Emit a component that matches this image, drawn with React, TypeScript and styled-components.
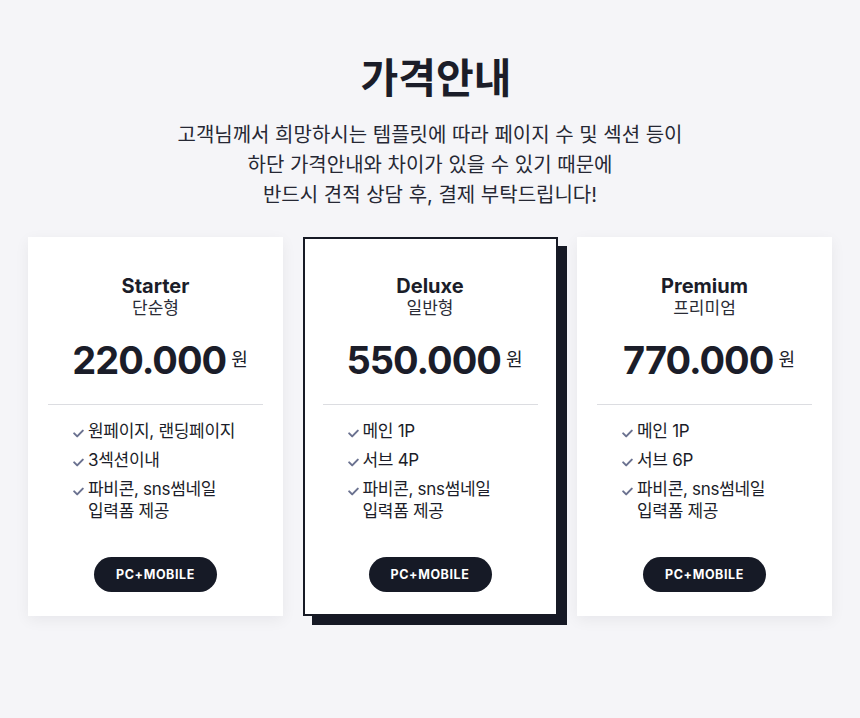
import React from "react";
import styled, { createGlobalStyle, css } from "styled-components";

const GlobalStyle = createGlobalStyle`
  html, body {
    margin: 0;
    padding: 0;
    background: #f5f5f8;
  }
  body {
    font-family: Inter, "Noto Sans CJK KR", sans-serif;
    color: #1b1d29;
  }
  * { box-sizing: border-box; }
`;

const Page = styled.main`
  min-height: 718px;
  padding: 54px 28px 0;
  background: #f5f5f8;
`;

const Header = styled.header`
  display: flex;
  flex-direction: column;
  align-items: center;
  text-align: center;
`;

const Title = styled.h1`
  margin: 0;
  padding-left: 12px;
  font-size: 41px;
  line-height: 48px;
  font-weight: 700;
  letter-spacing: 0;
  color: #1b1d29;
`;

const Lead = styled.p`
  margin: 18px 0 0;
  font-size: 20px;
  line-height: 30px;
  font-weight: 400;
  letter-spacing: 0;
  color: #262834;
`;

const Grid = styled.section`
  display: grid;
  grid-template-columns: repeat(3, 255px);
  column-gap: 19.5px;
  justify-content: center;
  margin-top: 27px;
`;

const Card = styled.article<{ $featured?: boolean }>`
  display: flex;
  flex-direction: column;
  align-items: stretch;
  height: 379px;
  background: #ffffff;
  padding: 37px 20px 24px;
  ${(p) =>
    p.$featured
      ? css`
          border: 2px solid #171a25;
          padding: 35px 18px 22px;
          box-shadow: 9px 9px 0 #161925;
        `
      : css`
          box-shadow: 0 4px 14px rgba(20, 24, 40, 0.06);
        `}
`;

const PlanName = styled.h2`
  margin: 0;
  text-align: center;
  font-size: 20px;
  line-height: 24px;
  font-weight: 700;
  color: #1b1d29;
`;

const PlanType = styled.div`
  text-align: center;
  font-size: 17px;
  line-height: 20px;
  font-weight: 400;
  color: #2a2c36;
`;

const PriceRow = styled.div`
  display: flex;
  justify-content: center;
  align-items: center;
  gap: 5px;
  margin-top: 19px;
  padding-left: 9px;
`;

const Amount = styled.span`
  font-size: 38px;
  line-height: 46px;
  font-weight: 700;
  letter-spacing: -1px;
  color: #1b1d29;
`;

const Unit = styled.span`
  font-size: 18px;
  line-height: 20px;
  color: #1b1d29;
`;

const Divider = styled.hr`
  margin: 21px 0 0;
  border: 0;
  height: 1px;
  background: #dcdde1;
`;

const Features = styled.ul`
  list-style: none;
  margin: 15px 0 0;
  padding: 0 0 0 25px;
  display: flex;
  flex-direction: column;
  gap: 5px;
`;

const Feature = styled.li`
  display: flex;
  align-items: flex-start;
  gap: 3px;
  font-size: 17px;
  line-height: 22px;
  letter-spacing: -0.3px;
  color: #1b1d29;
`;

const CheckBox = styled.span`
  display: inline-flex;
  width: 12px;
  height: 22px;
  align-items: center;
  margin-top: 2px;
  flex: none;
`;

const Button = styled.button`
  align-self: center;
  margin-top: auto;
  width: 123px;
  height: 35px;
  border: 0;
  border-radius: 18px;
  background: #161a26;
  color: #ffffff;
  font-family: Inter, "Noto Sans CJK KR", sans-serif;
  font-size: 12.5px;
  font-weight: 700;
  letter-spacing: 0.6px;
  cursor: pointer;
`;

const Check = () => (
  <CheckBox>
    <svg width="11" height="9" viewBox="0 0 11 9" fill="none">
      <path
        d="M1.2 4.4 L4.2 7.4 L9.8 1.6"
        stroke="#6b7290"
        strokeWidth="2"
        strokeLinecap="round"
        strokeLinejoin="round"
      />
    </svg>
  </CheckBox>
);

type Plan = {
  name: string;
  type: string;
  price: string;
  features: React.ReactNode[];
  featured?: boolean;
};

const extras = (
  <>
    파비콘, sns썸네일
    <br />
    입력폼 제공
  </>
);

const plans: Plan[] = [
  {
    name: "Starter",
    type: "단순형",
    price: "220.000",
    features: ["원페이지, 랜딩페이지", "3섹션이내", extras],
  },
  {
    name: "Deluxe",
    type: "일반형",
    price: "550.000",
    featured: true,
    features: ["메인 1P", "서브 4P", extras],
  },
  {
    name: "Premium",
    type: "프리미엄",
    price: "770.000",
    features: ["메인 1P", "서브 6P", extras],
  },
];

export default function App() {
  return (
    <>
      <GlobalStyle />
      <Page>
        <Header>
          <Title>가격안내</Title>
          <Lead>
            고객님께서 희망하시는 템플릿에 따라 페이지 수 및 섹션 등이
            <br />
            하단 가격안내와 차이가 있을 수 있기 때문에
            <br />
            반드시 견적 상담 후, 결제 부탁드립니다!
          </Lead>
        </Header>
        <Grid>
          {plans.map((p) => (
            <Card key={p.name} $featured={p.featured}>
              <PlanName>{p.name}</PlanName>
              <PlanType>{p.type}</PlanType>
              <PriceRow>
                <Amount>{p.price}</Amount>
                <Unit>원</Unit>
              </PriceRow>
              <Divider />
              <Features>
                {p.features.map((f, i) => (
                  <Feature key={i}>
                    <Check />
                    <span>{f}</span>
                  </Feature>
                ))}
              </Features>
              <Button>PC+MOBILE</Button>
            </Card>
          ))}
        </Grid>
      </Page>
    </>
  );
}
